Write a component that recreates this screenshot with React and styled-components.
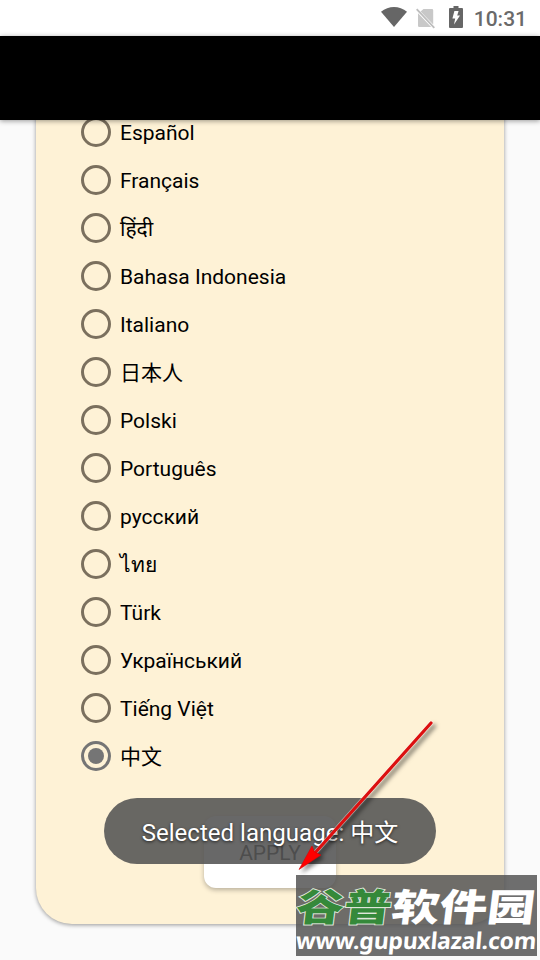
import React, { useState } from 'react';
import styled, { createGlobalStyle } from 'styled-components';

const languages = [
  { name: 'Español', code: 'es' },
  { name: 'Français', code: 'fr' },
  { name: 'हिंदी', code: 'hi' },
  { name: 'Bahasa Indonesia', code: 'id' },
  { name: 'Italiano', code: 'it' },
  { name: '日本人', code: 'ja' },
  { name: 'Polski', code: 'pl' },
  { name: 'Português', code: 'pt' },
  { name: 'русский', code: 'ru' },
  { name: 'ไทย', code: 'th' },
  { name: 'Türk', code: 'tr' },
  { name: 'Український', code: 'uk' },
  { name: 'Tiếng Việt', code: 'vi' },
  { name: '中文', code: 'zh' },
];

const WifiIcon = () => (
  <svg width="26" height="20" viewBox="0 0 26 20">
    <path d="M0 4.8C7.5-1.6 18.5-1.6 26 4.8L13 20Z" fill="#666" />
  </svg>
);

const NoSimIcon = () => (
  <svg width="19" height="21" viewBox="0 0 19 21">
    <path d="M7.5 1H16a1.2 1.2 0 0 1 1.2 1.2V16.4L4.600 3.6ZM2 5.2 15.2 19H3.2A1.2 1.2 0 0 1 2 17.8Z" fill="#c8c8c8" />
    <path d="M.7 1.2 18.3 19.8" stroke="#bdbdbd" strokeWidth="1.8" />
  </svg>
);

const BatteryIcon = () => (
  <svg width="14" height="22" viewBox="0 0 14 22">
    <path d="M4.5 0h5v2H13a1 1 0 0 1 1 1v18a1 1 0 0 1-1 1H1a1 1 0 0 1-1-1V3a1 1 0 0 1 1-1h3.5Z" fill="#666" />
    <path d="M5.4 5H9.6L8.2 9.6H11L5 18.6 6.2 12.6H3.400Z" fill="#fff" />
  </svg>
);

const App = () => {
  const [selected, setSelected] = useState('zh');
  const current = languages.find((language) => language.code === selected);

  return (
    <>
      <GlobalStyle />
      <Screen>
        <StatusBar>
          <WifiIcon />
          <NoSimIcon />
          <BatteryIcon />
          <Clock>10:31</Clock>
        </StatusBar>
        <ActionBar />
        <Content>
          <Card>
            <LanguageList role="radiogroup">
              {languages.map(({ name, code }) => (
                <Option
                  key={code}
                  role="radio"
                  aria-checked={code === selected}
                  onClick={() => setSelected(code)}
                >
                  <Radio $checked={code === selected} />
                  <OptionLabel lang={code}>{name}</OptionLabel>
                </Option>
              ))}
            </LanguageList>
            <ApplyButton type="button">APPLY</ApplyButton>
          </Card>
        </Content>
        <Toast>Selected language: {current.name}</Toast>
        <Watermark>
          <WatermarkName>
            <span>谷普</span>软件园
          </WatermarkName>
          <WatermarkUrl>www.gupuxlazal.com</WatermarkUrl>
        </Watermark>
        <Arrow width="150" height="160" viewBox="0 0 150 160">
          <path d="M141 8 24 139" stroke="#fff" strokeOpacity="0.5" strokeWidth="4.4" strokeLinecap="round" />
          <path d="M141 8 24 139" stroke="#dc1010" strokeWidth="3.2" strokeLinecap="round" />
          <path d="M9 154.500 22 131 24.500 137 31 140Z" fill="#f00" stroke="#d00" strokeWidth="0.6" />
        </Arrow>
      </Screen>
    </>
  );
};

const GlobalStyle = createGlobalStyle`
  * {
    box-sizing: border-box;
  }

  body {
    margin: 0;
    background: #fafafa;
    font-family: Roboto, 'Noto Sans', 'Noto Sans CJK SC', sans-serif;
  }
`;

const Screen = styled.div`
  position: relative;
  display: flex;
  flex-direction: column;
  width: 540px;
  height: 960px;
  overflow: hidden;
  background: #fafafa;
`;

const StatusBar = styled.div`
  display: flex;
  align-items: center;
  justify-content: flex-end;
  flex: none;
  height: 36px;
  padding: 0 13px 1px 0;
  background: #fff;

  svg:nth-of-type(1) {
    margin-top: -2px;
  }

  svg:nth-of-type(2) {
    margin: 2px 14px 0 9px;
  }

  svg:nth-of-type(3) {
    margin-top: -2px;
  }
`;

const Clock = styled.span`
  margin: 2px 0 0 11px;
  font-size: 21px;
  font-weight: 500;
  line-height: 24px;
  color: #6a6a6a;
`;

const ActionBar = styled.header`
  flex: none;
  height: 84px;
  background: #000;
  box-shadow: 0 1px 5px rgba(0, 0, 0, 0.4);
  z-index: 1;
`;

const Content = styled.main`
  display: flex;
  flex: 1;
  flex-direction: column;
  justify-content: flex-end;
  min-height: 0;
  padding: 0 36px 36px;
`;

/* scrolled to the end, so the top of the card is under the action bar */
const Card = styled.section`
  display: flex;
  flex-direction: column;
  align-items: center;
  padding: 0 0 36px;
  border-radius: 0 0 36px 36px;
  background: #fef2d6;
  box-shadow: 0 1px 4px rgba(0, 0, 0, 0.4);
`;

const LanguageList = styled.div`
  width: 100%;
  padding-left: 45px;
`;

const Option = styled.div`
  display: flex;
  align-items: center;
  height: 48px;
  cursor: pointer;
`;

const Radio = styled.span`
  display: flex;
  align-items: center;
  justify-content: center;
  flex: none;
  width: 30px;
  height: 30px;
  border: 3px solid ${({ $checked }) => ($checked ? '#757575' : '#7b705e')};
  border-radius: 50%;

  &::after {
    content: '';
    width: 16px;
    height: 16px;
    border-radius: 50%;
    background: ${({ $checked }) => ($checked ? '#757575' : 'transparent')};
  }
`;

const OptionLabel = styled.span`
  margin-left: 9px;
  padding-top: 2px;
  font-size: 21px;
  line-height: 28px;
  white-space: nowrap;
  color: #000;
`;

const ApplyButton = styled.button`
  width: 132px;
  height: 72px;
  margin-top: 36px;
  padding: 2px 0 0;
  border: none;
  border-radius: 12px;
  background: #fff;
  box-shadow: 0 2px 5px rgba(0, 0, 0, 0.28);
  font-family: inherit;
  font-size: 21px;
  color: #222;
`;

const Toast = styled.div`
  position: absolute;
  left: 104px;
  top: 798px;
  display: flex;
  align-items: center;
  justify-content: center;
  width: 332px;
  height: 66px;
  padding-top: 3px;
  border-radius: 33px;
  background: rgba(83, 83, 83, 0.88);
  font-size: 24px;
  line-height: 32px;
  letter-spacing: 0.03px;
  white-space: pre;
  color: #fff;
  text-shadow: 0 1px 3px rgba(0, 0, 0, 0.7);
`;

const Watermark = styled.div`
  position: absolute;
  left: 296px;
  top: 875px;
  display: flex;
  flex-direction: column;
  align-items: center;
  width: 241px;
  height: 81px;
  background: rgba(82, 82, 82, 0.84);
  color: #fff;
  white-space: nowrap;
`;

const WatermarkName = styled.div`
  height: 54px;
  font-family: 'Noto Sans CJK SC', sans-serif;
  font-size: 43px;
  font-weight: 900;
  line-height: 60px;
  transform: skewX(-7deg) scale(1.11, 0.88);

  span {
    color: #35893a;
    -webkit-text-stroke: 2px #dfe6da;
    paint-order: stroke fill;
  }
`;

const WatermarkUrl = styled.div`
  font-family: 'Noto Sans', sans-serif;
  font-size: 23px;
  font-weight: 700;
  line-height: 23px;
  letter-spacing: -0.25px;
  transform: skewX(-5deg);
`;

const Arrow = styled.svg`
  position: absolute;
  left: 290px;
  top: 715px;
  fill: none;
  filter: drop-shadow(3px 3px 2px rgba(0, 0, 0, 0.5));
  pointer-events: none;
`;

export default App;
